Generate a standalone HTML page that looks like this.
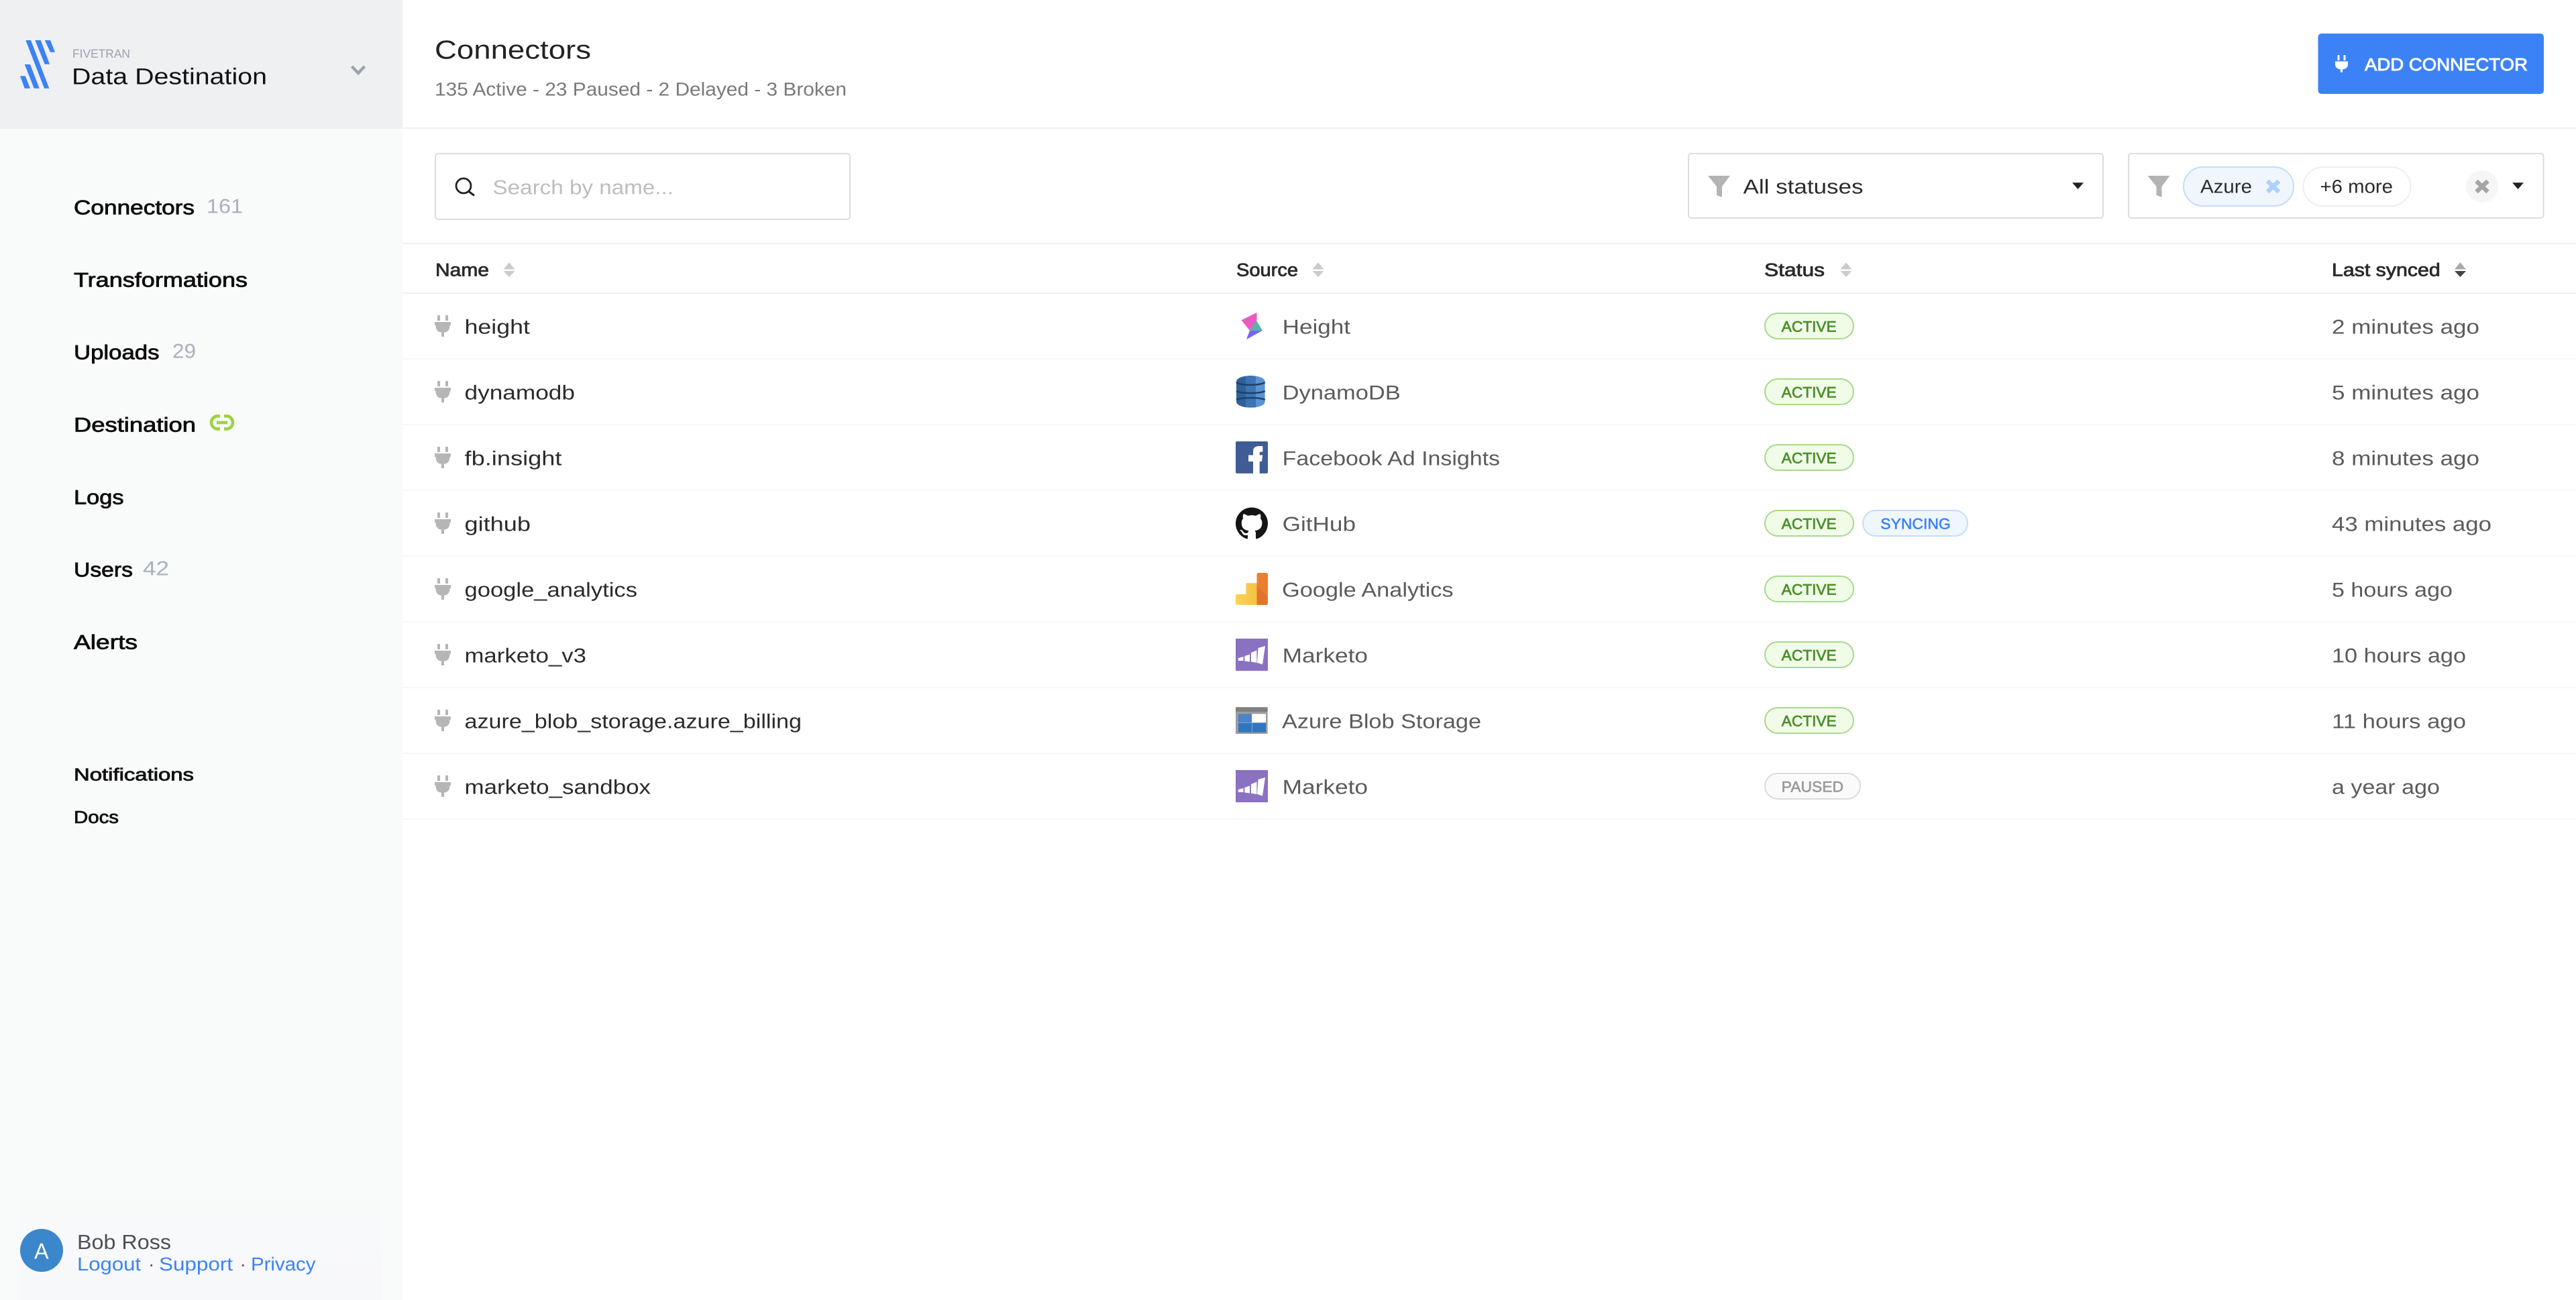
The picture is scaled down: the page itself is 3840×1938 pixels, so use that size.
<!DOCTYPE html>
<html lang="en"><head><meta charset="utf-8"><title>Connectors</title>
<style>
html,body{margin:0;padding:0;width:3840px;height:1938px;overflow:hidden;background:#fff}
svg{display:block;position:absolute;left:0;top:0}
text{font-family:"Liberation Sans",sans-serif;white-space:pre;text-rendering:geometricPrecision}
.nav{font-size:30px;fill:#0c0c0c;stroke:#0c0c0c;stroke-width:.8px}
.cnt{font-size:30px;fill:#a9b1bc}
.nav2{font-size:26px;fill:#111;stroke:#111;stroke-width:.8px}
.th{font-size:27px;fill:#2a2a2a;stroke:#2a2a2a;stroke-width:.8px}
.nm{font-size:30px;fill:#2b2b2b}
.sr{font-size:30px;fill:#5b5b5b}
.ls{font-size:30px;fill:#5b5b5b}
.ac{font-size:22.5px;fill:#4a8f28;stroke:#4a8f28;stroke-width:.7px}
.sy{font-size:22.5px;fill:#3b82f6;stroke:#3b82f6;stroke-width:.6px}
.pa{font-size:22.5px;fill:#999;stroke:#999;stroke-width:.6px}
.ft{font-size:28px;fill:#3b82f6}
</style></head><body>
<svg width="3840" height="1938" viewBox="0 0 3840 1938" xmlns="http://www.w3.org/2000/svg">
<defs>
<linearGradient id="fg" x1="0" y1="0" x2="0" y2="1"><stop offset="0" stop-color="#f9fafa"/><stop offset="1" stop-color="#f7f8fa"/></linearGradient>
<linearGradient id="yg" x1="0" y1="0" x2="1" y2="0"><stop offset="0" stop-color="#f9d35a"/><stop offset="1" stop-color="#f5c243"/></linearGradient>
<clipPath id="dy"><path d="M0 9 C0 3 12 0 21.3 0 C31 0 42.7 3 42.7 9 V38.7 C42.7 44.7 31 47.7 21.3 47.7 C12 47.7 0 44.7 0 38.7Z"/></clipPath>
<symbol id="plug" viewBox="0 0 24 32" width="24" height="32"><path fill="#b6b6b6" d="M4 0h4v8H4zM16 0h4v8h-4zM0 10H24V15H22.500C22.500 22 19 25.500 14 25.500V32H10V25.500C5 25.500 1.500 22 1.500 15H0Z"/></symbol>
<symbol id="sort" viewBox="0 0 17 22" width="17" height="22"><path fill="#cbcbcb" d="M8.5 0 L17 10.5H0ZM0 13H17L8.5 22Z"/></symbol>
<symbol id="filt" viewBox="0 0 33 32" width="33" height="32"><path fill="#b3b3b3" d="M0 0H33L21 16V32L13 29V16Z"/></symbol>
<symbol id="mkt" viewBox="0 0 48 48" width="48" height="48"><rect width="48" height="48" fill="#8b71c1"/><path fill="#fff" d="M3.800 29L11.500 27V33H3.800ZM13.400 26L21 23.500V34.500L13.400 33.500ZM22.900 21L31.400 17.500V36L22.900 34.500ZM33.500 14L44 11 40 38.500 32 36Z"/></symbol>
</defs>

<!-- sidebar -->
<rect x="0" y="0" width="600" height="1938" fill="#f9fafa"/>
<rect x="0" y="0" width="600" height="192" fill="#eff0f2"/>
<rect x="30" y="1740" width="540" height="198" fill="url(#fg)"/>
<g fill="#3c82f6">
<polygon points="38.300,60 46,60 73.300,131.700 66,131.700"/>
<polygon points="52.300,60 60.700,60 74,95.700 66.700,95.700"/>
<polygon points="66.700,60 75,60 82,77.700 75,77.700"/>
<polygon points="36.700,96 45,96 58.700,131.700 50.700,131.700"/>
<polygon points="30,113.300 37.700,113.300 45,131.700 36.700,131.700"/>
</g>
<text x="108" y="86" font-size="18" fill="#9aa3af" textLength="86" lengthAdjust="spacingAndGlyphs">FIVETRAN</text>
<text x="107" y="125.500" font-size="34" fill="#111" textLength="291" lengthAdjust="spacingAndGlyphs">Data Destination</text>
<path d="M524.500 99 L534 109 L543.500 99" fill="none" stroke="#9aa3af" stroke-width="4.500"/>

<text class="nav" x="110" y="319.500" textLength="180" lengthAdjust="spacingAndGlyphs">Connectors</text>
<text class="cnt" x="308" y="317.500" textLength="54" lengthAdjust="spacingAndGlyphs">161</text>
<text class="nav" x="110" y="427.500" textLength="259" lengthAdjust="spacingAndGlyphs">Transformations</text>
<text class="nav" x="110" y="535.500" textLength="127.500" lengthAdjust="spacingAndGlyphs">Uploads</text>
<text class="cnt" x="257" y="533.500" textLength="35" lengthAdjust="spacingAndGlyphs">29</text>
<text class="nav" x="110" y="643.500" textLength="182" lengthAdjust="spacingAndGlyphs">Destination</text>
<g fill="none" stroke="#9bd33f" stroke-width="4.600" transform="translate(311,618)"><path d="M17 2.300H12A9.700 9.700 0 0 0 12 21.400H17"/><path d="M23 2.300H28A9.700 9.700 0 0 1 28 21.400H23"/><path d="M12 12H28"/></g>
<text class="nav" x="110" y="751.500" textLength="74.500" lengthAdjust="spacingAndGlyphs">Logs</text>
<text class="nav" x="110" y="859.500" textLength="88" lengthAdjust="spacingAndGlyphs">Users</text>
<text class="cnt" x="213" y="857.500" textLength="39" lengthAdjust="spacingAndGlyphs">42</text>
<text class="nav" x="110" y="967.500" textLength="95" lengthAdjust="spacingAndGlyphs">Alerts</text>
<text class="nav2" x="110" y="1163.500" textLength="179" lengthAdjust="spacingAndGlyphs">Notifications</text>
<text class="nav2" x="110" y="1227" textLength="67" lengthAdjust="spacingAndGlyphs">Docs</text>

<ellipse cx="62" cy="1864" rx="32" ry="32" fill="#3c87cb"/>
<text x="51" y="1876.500" font-size="33" fill="#fff" textLength="21.600" lengthAdjust="spacingAndGlyphs">A</text>
<text x="115" y="1862" font-size="30.500" fill="#4c4f55" textLength="140" lengthAdjust="spacingAndGlyphs">Bob Ross</text>
<text class="ft" x="115" y="1894" textLength="95" lengthAdjust="spacingAndGlyphs">Logout</text>
<text x="221" y="1894" font-size="28" fill="#555">·</text>
<text class="ft" x="237" y="1894" textLength="110" lengthAdjust="spacingAndGlyphs">Support</text>
<text x="357.500" y="1894" font-size="28" fill="#555">·</text>
<text class="ft" x="374" y="1894" textLength="96.500" lengthAdjust="spacingAndGlyphs">Privacy</text>

<!-- header -->
<text x="648" y="87.300" font-size="39" fill="#222" textLength="233" lengthAdjust="spacingAndGlyphs">Connectors</text>
<text x="648" y="142.300" font-size="28" fill="#7a7a7a" textLength="614" lengthAdjust="spacingAndGlyphs">135 Active - 23 Paused - 2 Delayed - 3 Broken</text>
<rect x="3455.500" y="50" width="336.500" height="90" rx="5" fill="#3c82f6"/>
<g transform="translate(3481,82)"><path fill="#fff" d="M3.500 0h3v8h-3zM12.500 0h3v8h-3zM0 9.500H19V14C19 18.500 15.500 21 11 21.500V25.700H8V21.500C3.500 21 0 18.500 0 14Z"/></g>
<text x="3525" y="105" font-size="26" fill="#fff" stroke="#fff" stroke-width=".9" textLength="243" lengthAdjust="spacingAndGlyphs">ADD CONNECTOR</text>
<rect x="600" y="190" width="3240" height="2" fill="#f0f0f0"/>
<rect x="600" y="362" width="3240" height="2" fill="#f0f0f0"/>

<!-- toolbar -->
<rect x="649" y="229" width="618" height="98" rx="4" fill="#fff" stroke="#dcdcdc" stroke-width="2"/>
<circle cx="691" cy="277" r="11" fill="none" stroke="#222" stroke-width="2.800"/>
<path d="M699 285.500L707 291.500" stroke="#222" stroke-width="3" fill="none"/>
<text x="734.500" y="289.300" font-size="30" fill="#bdbdbd" textLength="269.500" lengthAdjust="spacingAndGlyphs">Search by name...</text>

<rect x="2517" y="229" width="618" height="96" rx="4" fill="#fff" stroke="#dcdcdc" stroke-width="2"/>
<use href="#filt" x="2546" y="262"/>
<text x="2598.500" y="288.300" font-size="30" fill="#2b2b2b" textLength="179" lengthAdjust="spacingAndGlyphs">All statuses</text>
<path d="M3089 272.300H3106L3097.500 282Z" fill="#222"/>

<rect x="3173" y="229" width="618.500" height="96" rx="4" fill="#fff" stroke="#dcdcdc" stroke-width="2"/>
<use href="#filt" x="3201.500" y="262"/>
<rect x="3255" y="249" width="164" height="58" rx="29" fill="#eff6fe" stroke="#c5dcf9" stroke-width="2"/>
<text x="3280" y="287.700" font-size="28" fill="#2b2b2b" textLength="77" lengthAdjust="spacingAndGlyphs">Azure</text>
<path d="M3380 270L3397 286M3397 270L3380 286" stroke="#afd0fb" stroke-width="6.500" fill="none"/>
<rect x="3433.500" y="249" width="160" height="58" rx="29" fill="#fff" stroke="#eee" stroke-width="2"/>
<text x="3458.500" y="287.700" font-size="28" fill="#2b2b2b" textLength="108.500" lengthAdjust="spacingAndGlyphs">+6 more</text>
<ellipse cx="3700" cy="278" rx="24" ry="24" fill="#f6f6f6"/>
<path d="M3691.500 270L3708.500 286M3708.500 270L3691.500 286" stroke="#a5a5a5" stroke-width="6.500" fill="none"/>
<path d="M3745 272.300H3762L3753.500 282Z" fill="#222"/>

<!-- table head -->
<text class="th" x="649" y="411.700" textLength="80" lengthAdjust="spacingAndGlyphs">Name</text>
<use href="#sort" x="750.500" y="391"/>
<text class="th" x="1843" y="411.700" textLength="92" lengthAdjust="spacingAndGlyphs">Source</text>
<use href="#sort" x="1956.500" y="391"/>
<text class="th" x="2630" y="411.700" textLength="90" lengthAdjust="spacingAndGlyphs">Status</text>
<use href="#sort" x="2743.500" y="391"/>
<text class="th" x="3476" y="411.700" textLength="161.700" lengthAdjust="spacingAndGlyphs">Last synced</text>
<g transform="translate(3659,391)"><path fill="#aaa" d="M8.500 0L17 10.500H0Z"/><path fill="#444" d="M0 13H17L8.500 22Z"/></g>
<rect x="600" y="436" width="3240" height="2" fill="#f0f0f0"/>
<g fill="#f7f7f7">
<rect x="600" y="534" width="3240" height="2"/><rect x="600" y="632" width="3240" height="2"/><rect x="600" y="730" width="3240" height="2"/><rect x="600" y="828" width="3240" height="2"/><rect x="600" y="926" width="3240" height="2"/><rect x="600" y="1024" width="3240" height="2"/><rect x="600" y="1122" width="3240" height="2"/><rect x="600" y="1220" width="3240" height="2"/>
</g>

<!-- plugs -->
<use href="#plug" x="648" y="470"/><use href="#plug" x="648" y="568"/><use href="#plug" x="648" y="666"/><use href="#plug" x="648" y="764"/><use href="#plug" x="648" y="862"/><use href="#plug" x="648" y="960"/><use href="#plug" x="648" y="1058"/><use href="#plug" x="648" y="1156"/>

<!-- names -->
<text class="nm" x="692.500" y="497.500" textLength="97.500" lengthAdjust="spacingAndGlyphs">height</text>
<text class="nm" x="692.500" y="595.500" textLength="164.500" lengthAdjust="spacingAndGlyphs">dynamodb</text>
<text class="nm" x="692.500" y="693.500" textLength="145" lengthAdjust="spacingAndGlyphs">fb.insight</text>
<text class="nm" x="692.500" y="791.500" textLength="98.500" lengthAdjust="spacingAndGlyphs">github</text>
<text class="nm" x="692.500" y="889.500" textLength="257.500" lengthAdjust="spacingAndGlyphs">google_analytics</text>
<text class="nm" x="692.500" y="987.500" textLength="181.500" lengthAdjust="spacingAndGlyphs">marketo_v3</text>
<text class="nm" x="692.500" y="1085.500" textLength="502.500" lengthAdjust="spacingAndGlyphs">azure_blob_storage.azure_billing</text>
<text class="nm" x="692.500" y="1183.500" textLength="277.500" lengthAdjust="spacingAndGlyphs">marketo_sandbox</text>

<!-- source icons -->
<polygon fill="#e85bc1" points="1873.500,466 1850.500,477.300 1863,492.700 1873.500,477"/>
<polygon fill="#56b5a8" points="1863,492.700 1872.700,477.500 1882,492.700"/>
<polygon fill="#7567f2" points="1863,492.700 1882,492.700 1858,506"/>

<g transform="translate(1843,560)">
<g clip-path="url(#dy)">
<rect x="0" y="0" width="14" height="47.700" fill="#2f6199"/>
<rect x="14" y="0" width="15" height="47.700" fill="#3d74b5"/>
<rect x="29" y="0" width="13.700" height="47.700" fill="#5c93d1"/>
</g>
<path d="M0 10C8 15 34 15 42.700 10M0 23C8 27 34 27 42.700 23M0 36C8 32 34 32 42.700 36" fill="none" stroke="#20416b" stroke-width="2.600"/>
</g>

<g transform="translate(1842,658)"><rect width="48" height="47.700" rx="2" fill="#3f5c95"/><path fill="#fff" d="M26 47.700V30H19V20.500H26V15C26 9 30 7 35 7H40.300V15.500H37C36 15.500 35.700 16 35.700 17.500V20.500H40.300L39 30H35.700V47.700Z"/></g>

<g transform="translate(1842,756.500) scale(3)"><path fill="#141414" d="M8 0C3.580 0 0 3.580 0 8c0 3.540 2.290 6.530 5.470 7.590.4.070.55-.17.55-.38 0-.19-.01-.82-.01-1.490-2.010.37-2.530-.49-2.690-.94-.09-.23-.48-.94-.82-1.130-.28-.15-.68-.52-.01-.53.630-.01 1.080.58 1.230.82.720 1.210 1.870.87 2.330.66.070-.52.280-.87.510-1.070-1.780-.2-3.640-.89-3.640-3.950 0-.87.310-1.590.82-2.150-.08-.2-.36-1.020.08-2.120 0 0 .67-.21 2.200.82.640-.18 1.320-.27 2-.27.680 0 1.360.09 2 .27 1.530-1.040 2.200-.82 2.200-.82.440 1.100.160 1.920.08 2.120.510.560.820 1.270.820 2.150 0 3.070-1.870 3.750-3.650 3.950.290.250.540.730.540 1.480 0 1.070-.01 1.930-.01 2.200 0 .210.150.460.550.380A8.013 8.013 0 0016 8c0-4.420-3.580-8-8-8z"/></g>

<g transform="translate(1842,854)">
<path fill="url(#yg)" d="M3 31.700H15.400V15.300H31.500V47.700H3C1 47.700 0 46.700 0 44.700V34.700C0 32.700 1 31.700 3 31.700Z"/>
<path fill="#e8812f" d="M31.500 3C31.500 1 32.500 0 34.500 0H45C47 0 48 1 48 3V44.700C48 46.700 47 47.700 45 47.700H31.500Z"/>
<path fill="#e2752d" d="M31.500 19L48 36V44.700C48 46.700 47 47.700 45 47.700H31.500Z"/>
</g>

<use href="#mkt" x="1842" y="952"/>

<g transform="translate(1842,1054.300)">
<rect width="47.600" height="39.700" fill="#9c9c9c"/>
<rect width="47.600" height="6.700" fill="#808080"/>
<rect x="4" y="10" width="20" height="13.400" fill="#4a83c8"/>
<rect x="24" y="10" width="21" height="13.400" fill="#fff"/>
<rect x="4" y="23.400" width="41" height="14" fill="#2f76c1"/>
<rect x="4" y="22.700" width="41" height="1" fill="#7ea5d4"/>
<rect x="24" y="23.400" width="1" height="14" fill="#7ea5d4"/>
</g>

<use href="#mkt" x="1842" y="1148"/>

<!-- source names -->
<text class="sr" x="1911.700" y="497.500" textLength="101.300" lengthAdjust="spacingAndGlyphs">Height</text>
<text class="sr" x="1911.700" y="595.500" textLength="176" lengthAdjust="spacingAndGlyphs">DynamoDB</text>
<text class="sr" x="1911.700" y="693.500" textLength="324.300" lengthAdjust="spacingAndGlyphs">Facebook Ad Insights</text>
<text class="sr" x="1911.700" y="791.500" textLength="109.300" lengthAdjust="spacingAndGlyphs">GitHub</text>
<text class="sr" x="1911" y="889.500" textLength="255.600" lengthAdjust="spacingAndGlyphs">Google Analytics</text>
<text class="sr" x="1911.700" y="987.500" textLength="127.300" lengthAdjust="spacingAndGlyphs">Marketo</text>
<text class="sr" x="1911" y="1085.500" textLength="297" lengthAdjust="spacingAndGlyphs">Azure Blob Storage</text>
<text class="sr" x="1911.700" y="1183.500" textLength="127.300" lengthAdjust="spacingAndGlyphs">Marketo</text>

<!-- status pills -->
<g fill="#f0fce8" stroke="#a7d98c" stroke-width="2">
<rect x="2631" y="467" width="132" height="38" rx="19"/><rect x="2631" y="565" width="132" height="38" rx="19"/><rect x="2631" y="663" width="132" height="38" rx="19"/><rect x="2631" y="761" width="132" height="38" rx="19"/><rect x="2631" y="859" width="132" height="38" rx="19"/><rect x="2631" y="957" width="132" height="38" rx="19"/><rect x="2631" y="1055" width="132" height="38" rx="19"/>
</g>
<text class="ac" x="2655.700" y="494.300" textLength="82" lengthAdjust="spacingAndGlyphs">ACTIVE</text>
<text class="ac" x="2655.700" y="592.300" textLength="82" lengthAdjust="spacingAndGlyphs">ACTIVE</text>
<text class="ac" x="2655.700" y="690.300" textLength="82" lengthAdjust="spacingAndGlyphs">ACTIVE</text>
<text class="ac" x="2655.700" y="788.300" textLength="82" lengthAdjust="spacingAndGlyphs">ACTIVE</text>
<text class="ac" x="2655.700" y="886.300" textLength="82" lengthAdjust="spacingAndGlyphs">ACTIVE</text>
<text class="ac" x="2655.700" y="984.300" textLength="82" lengthAdjust="spacingAndGlyphs">ACTIVE</text>
<text class="ac" x="2655.700" y="1082.300" textLength="82" lengthAdjust="spacingAndGlyphs">ACTIVE</text>
<rect x="2777" y="761" width="156" height="38" rx="19" fill="#f0f6fe" stroke="#c5dcf9" stroke-width="2"/>
<text class="sy" x="2803.300" y="788.300" textLength="104.400" lengthAdjust="spacingAndGlyphs">SYNCING</text>
<rect x="2631" y="1153" width="142" height="38" rx="19" fill="#fafafa" stroke="#dcdcdc" stroke-width="2"/>
<text class="pa" x="2655.700" y="1180.300" textLength="92.300" lengthAdjust="spacingAndGlyphs">PAUSED</text>

<!-- last synced -->
<text class="ls" x="3476" y="497.500" textLength="220" lengthAdjust="spacingAndGlyphs">2 minutes ago</text>
<text class="ls" x="3476" y="595.500" textLength="220" lengthAdjust="spacingAndGlyphs">5 minutes ago</text>
<text class="ls" x="3476" y="693.500" textLength="220" lengthAdjust="spacingAndGlyphs">8 minutes ago</text>
<text class="ls" x="3476" y="791.500" textLength="238" lengthAdjust="spacingAndGlyphs">43 minutes ago</text>
<text class="ls" x="3476" y="889.500" textLength="180" lengthAdjust="spacingAndGlyphs">5 hours ago</text>
<text class="ls" x="3476" y="987.500" textLength="200" lengthAdjust="spacingAndGlyphs">10 hours ago</text>
<text class="ls" x="3476" y="1085.500" textLength="200" lengthAdjust="spacingAndGlyphs">11 hours ago</text>
<text class="ls" x="3476" y="1183.500" textLength="161" lengthAdjust="spacingAndGlyphs">a year ago</text>
</svg>
</body></html>
